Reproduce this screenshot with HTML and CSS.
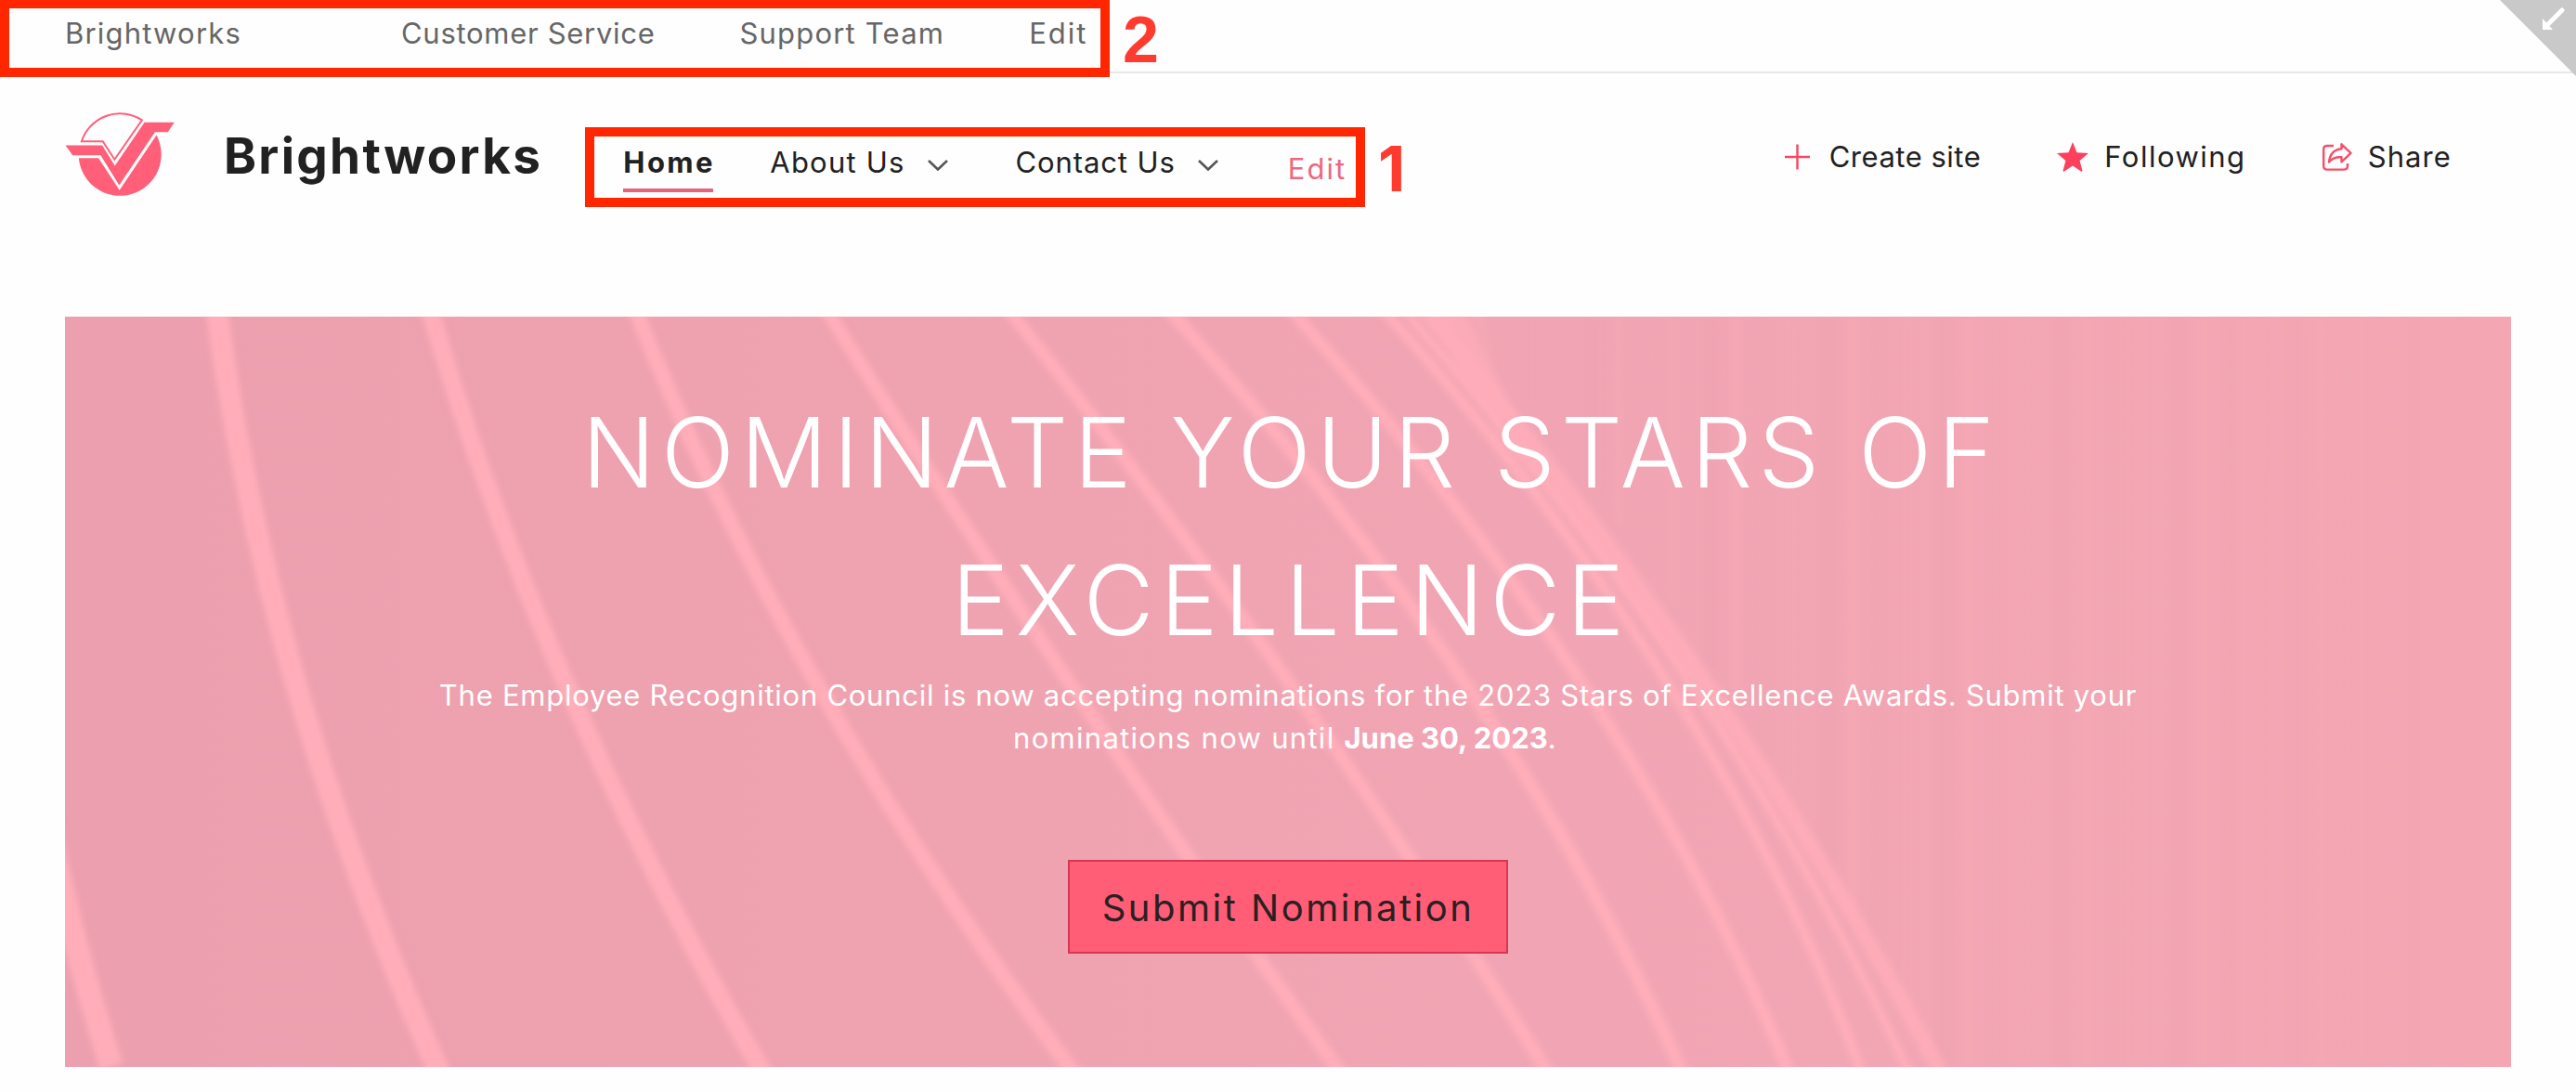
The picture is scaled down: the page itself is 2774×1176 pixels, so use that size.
FILE: index.html
```
<!DOCTYPE html>
<html lang="en">
<head>
  <meta charset="UTF-8" />
  <meta name="viewport" content="width=device-width, initial-scale=1.0"/>
  <title>Brightworks</title>
  <link rel="stylesheet" href="styles.css">
</head>
<body>
  <nav class="hub-nav">
    <a class="hub-home">Brightworks</a>
    <a class="hub-service">Customer Service</a>
    <a class="hub-team">Support Team</a>
    <a class="edit">Edit</a>
  </nav>

  <header class="site-header">
    <svg class="logo" viewBox="60 30 360 280">
      <path d="M113 127 H182 L220 186 L309 58 A131 131 0 0 0 113 127 Z" fill="none" stroke="#ff5f78" stroke-width="6"/>
      <path d="M61 140 H180 L221 206 L317 65 H414 L393 97 H351 L235 269 L175 172 H84 Z" fill="#ff5f78"/>
      <path d="M104 181 H168 L236 285 L356 107 A134 134 0 1 1 104 181 Z" fill="#ff5f78"/>
    </svg>
    <h1 class="site-title">Brightworks</h1>
    <nav class="site-nav">
      <a class="home">Home</a>
      <a class="about">About Us</a>
      <svg class="chevron" viewBox="0 0 22 12"><path d="M1 1 L11 10.500 L21 1"/></svg>
      <a class="contact">Contact Us</a>
      <svg class="chevron" viewBox="0 0 22 12"><path d="M1 1 L11 10.500 L21 1"/></svg>
      <a class="edit">Edit</a>
    </nav>
    <div class="actions">
      <a class="action create">
        <svg width="27" height="28" viewBox="0 0 27 28"><path d="M13.5 0.5 V27.5 M0 14 H27" fill="none" stroke="#f84561" stroke-width="2.400"/></svg>
        Create site
      </a>
      <a class="action following">
        <svg width="34" height="32" viewBox="0 0 34 32"><path d="M17 0 L21.5 11.3 L34 12 L24.6 20 L27.5 31 Q27 32 26 31.5 L17 25.5 L8 31.5 Q7 32 6.500 31 L9.400 20 L0 12 L12.500 11.300 Z" fill="#fd405d"/></svg>
        Following
      </a>
      <a class="action share">
        <svg width="32" height="30" viewBox="0 0 32 30">
          <path d="M12 3 H5 Q1.200 3 1.200 6.500 V25 Q1.200 28.600 5 28.600 H23 Q27 28.600 27 25 V22" />
          <path d="M20.500 1.300 L30.500 10.800 L20.500 20.300 V15.300 Q12 14.500 7 20.500 Q8.500 7.500 20.500 6.300 Z"/>
        </svg>
        Share
      </a>
    </div>
  </header>

  <section class="hero">
    <svg class="hero-art" viewBox="0 0 2634 808" preserveAspectRatio="none">
      <defs>
        <linearGradient id="base">
          <stop offset="0" stop-color="#ec9fae"/>
          <stop offset="0.35" stop-color="#efa2af"/>
          <stop offset="0.6" stop-color="#f1a5b4"/>
          <stop offset="1" stop-color="#f4a7b3"/>
        </linearGradient>
        <linearGradient id="ray" x1="0" x2="0" y1="0" y2="1">
          <stop offset="0" stop-color="#ffadb9" stop-opacity="0.8"/>
          <stop offset="1" stop-color="#ffadb9" stop-opacity="0"/>
        </linearGradient>
        <pattern id="stripes" width="126" height="808" patternUnits="userSpaceOnUse">
          <rect x="0" width="16" height="808" fill="#eb9faa" opacity="0.25"/>
          <rect x="30" width="10" height="808" fill="#f8abb5" opacity="0.35"/>
          <rect x="56" width="14" height="808" fill="#eb9faa" opacity="0.15"/>
          <rect x="88" width="12" height="808" fill="#f8abb5" opacity="0.3"/>
        </pattern>
        <linearGradient id="fade">
          <stop offset="0" stop-color="#000"/>
          <stop offset="0.25" stop-color="#fff"/>
          <stop offset="0.7" stop-color="#fff"/>
          <stop offset="1" stop-color="#000"/>
        </linearGradient>
        <mask id="stripe-mask"><rect x="1500" width="1134" height="808" fill="url(#fade)"/></mask>
        <filter id="soft" x="-5%" y="-5%" width="110%" height="110%"><feGaussianBlur stdDeviation="3"/></filter>
      </defs>
      <rect width="2634" height="808" fill="url(#base)"/>
      <g mask="url(#stripe-mask)">
        <path d="M1500 0 H2634 V808 H2000 Q1810 370 1500 0 Z" fill="url(#stripes)" filter="url(#soft)"/>
      </g>
      <g filter="url(#soft)">
        <path d="M1462 -10 L1504 -10 L1640 260 L1610 240 Z" fill="url(#ray)"/>
        <path d="M1512 -10 L1528 -10 L1560 190 L1548 190 Z" fill="url(#ray)" opacity="0.4"/>
        <g class="curves">
          <path d="M-28 500 Q0 650 50 808" stroke-width="26"/>
          <path d="M163 -10 Q218 404 405 818" stroke-width="24"/>
          <path d="M392 -10 Q513 404 754 818" stroke-width="20"/>
          <path d="M613 -10 Q778 404 1089 818" stroke-width="17"/>
          <path d="M818 -10 Q1079 404 1376 818" stroke-width="15"/>
          <path d="M1014 -10 Q1344 404 1599 818" stroke-width="14"/>
          <path d="M1186 -10 Q1563 404 1743 818" stroke-width="14"/>
          <path d="M1318 -10 Q1691 404 1858 818" stroke-width="13"/>
          <path d="M1417 -10 Q1787 404 1936 818" stroke-width="11"/>
          <path d="M1439 -10 Q1799 404 1987 818" stroke-width="9"/>
          <path d="M1462 -10 Q1804 404 2022 818" stroke-width="17" opacity="0.85"/>
        </g>
      </g>
    </svg>
    <div class="hero-content">
      <h2>NOMINATE YOUR STARS OF<br><span>EXCELLENCE</span></h2>
      <p>The Employee Recognition Council is now accepting nominations for the 2023 Stars of Excellence Awards. Submit your<br><span class="deadline">nominations now until <b>June 30, 2023</b>.</span></p>
      <a class="button">Submit Nomination</a>
    </div>
  </section>

  <!-- Full screen toggle -->
  <div class="corner">
    <svg viewBox="0 0 82 82"><path d="M0 0 H82 V82 Z" fill="#c9c9c9"/><path d="M67 11 L52 26" stroke="#fff" stroke-width="5" stroke-linecap="round"/><path d="M46 20 V32 H57 Z" fill="#fff"/></svg>
  </div>

  <!-- Callouts over the two navigation bars -->
  <div class="frame frame-hub"></div>
  <div class="frame frame-site"></div>
  <span class="number number-hub">2</span>
  <span class="number number-site">1</span>
</body>
</html>
```
FILE: styles.css
```
* {
  box-sizing: border-box;
}
body {
  margin: 0;
  position: relative;
  height: 1176px;
  overflow: hidden;
  background: #fefefe;
  color: #212121;
  font-family: Inter, sans-serif;
  font-size: 31px;
}
a {
  white-space: nowrap;
}
.hub-nav {
  display: flex;
  gap: 91px;
  height: 79px;
  padding-left: 70px;
  border-bottom: 2px solid #e8e8e8;
  line-height: 71px;
  color: #666;
}
.hub-home {
  margin-right: 81px;
  letter-spacing: 1.2px;
}
.hub-service {
  letter-spacing: 0.7px;
}
.hub-team {
  letter-spacing: 1.2px;
}
.edit {
  letter-spacing: 2px;
}
.site-header {
  display: flex;
  align-items: flex-start;
  height: 262px;
  padding: 0 134px 0 70px;
}
.logo {
  width: 120px;
  height: 93px;
  margin-top: 41px;
}
.site-title {
  margin: 58px 0 0 51px;
  font-size: 53px;
  font-weight: 700;
  line-height: 62px;
  letter-spacing: 2.3px;
}
.site-nav {
  display: flex;
  align-items: flex-start;
  margin: 76px 0 0 87px;
  line-height: 40px;
}
.home {
  width: 97px;
  padding-bottom: 8px;
  border-bottom: 4px solid #e9637e;
  font-weight: 700;
  letter-spacing: 2.4px;
}
.about {
  margin-left: 61px;
  letter-spacing: 1.2px;
}
.contact {
  margin-left: 73px;
  letter-spacing: 0.9px;
}
.chevron {
  width: 22px;
  height: 12px;
  margin: 17px 0 0 24px;
  fill: none;
  stroke: #555;
  stroke-width: 2.6;
}
.site-nav .edit {
  margin: 7px 0 0 75px;
  color: #ee6782;
}
.actions {
  display: flex;
  gap: 82px;
  margin: 70px 0 0 auto;
  line-height: 40px;
}
.action {
  display: flex;
  align-items: center;
  gap: 17px;
}
.create {
  gap: 21px;
  letter-spacing: 0.5px;
}
.following {
  letter-spacing: 1.5px;
}
.share {
  letter-spacing: 1.1px;
}
.share svg {
  fill: none;
  stroke: #f5506b;
  stroke-width: 2.4;
  stroke-linejoin: round;
}
.hero {
  display: grid;
  height: 808px;
  margin: 0 70px;
  color: #fff;
}
.hero-art,
.hero-content {
  grid-area: 1 / 1;
}
.hero-art {
  width: 100%;
  height: 808px;
}
.curves {
  fill: none;
  stroke: #ffadb9;
}
.hero-content {
  display: flex;
  flex-direction: column;
  align-items: center;
  z-index: 1;
  padding-top: 67px;
  text-align: center;
}
h2 {
  margin: 0;
  padding-left: 7px;
  font-size: 104px;
  font-weight: 350;
  line-height: 159px;
  letter-spacing: 6.4px;
  white-space: nowrap;
}
h2 span {
  letter-spacing: 7px;
}
p {
  margin: 0;
  line-height: 46px;
  letter-spacing: 0.74px;
  white-space: nowrap;
}
.deadline {
  margin-right: 6px;
  letter-spacing: 1.3px;
}
.deadline b {
  font-weight: 700;
  letter-spacing: 0;
}
.button {
  width: 474px;
  height: 101px;
  margin-top: 108px;
  border: 2px solid #d53852;
  background: #ff5e76;
  color: #2b2021;
  font-size: 40px;
  line-height: 99px;
  letter-spacing: 2.5px;
}
.corner {
  position: absolute;
  top: 0;
  right: 0;
  width: 82px;
  height: 82px;
}
.frame {
  position: absolute;
  border: 10px solid #ff2600;
}
.frame-hub {
  top: -1px;
  left: 0;
  width: 1195px;
  height: 84px;
}
.frame-site {
  top: 137px;
  left: 630px;
  width: 840px;
  height: 86px;
}
.number {
  position: absolute;
  color: #ff3b30;
  font: bold 70px/70px "Liberation Sans", sans-serif;
}
.number-hub {
  top: 8px;
  left: 1209px;
}
.number-site {
  top: 146px;
  left: 1484px;
  font-family: Inter, sans-serif;
  font-size: 68px;
}
```
